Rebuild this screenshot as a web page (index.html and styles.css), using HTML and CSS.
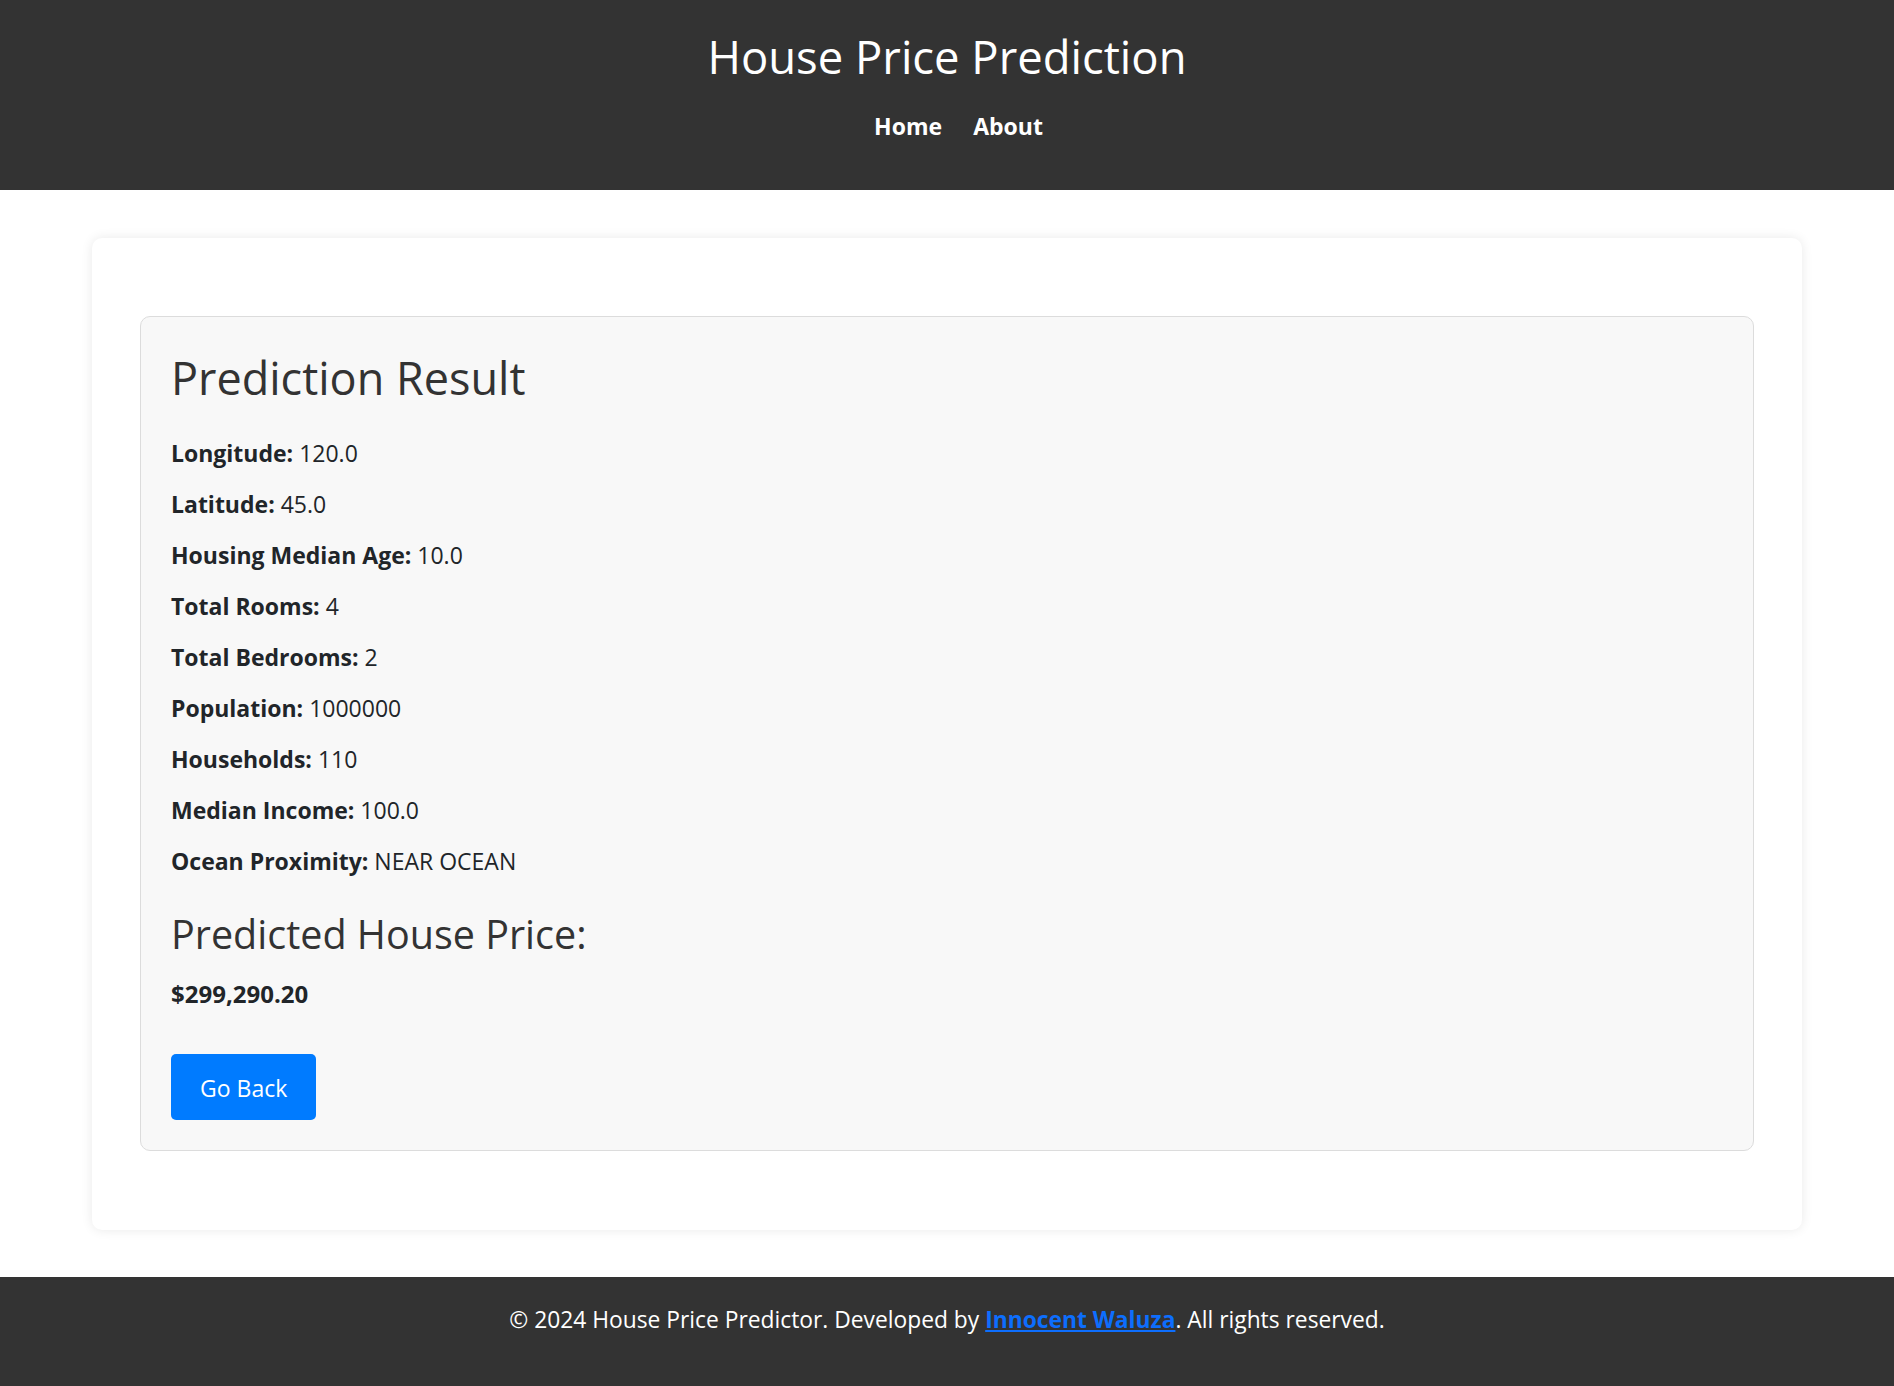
FILE: index.html
```html
<!DOCTYPE html>
<html lang="en">
<head>
<meta charset="utf-8">
<title>House Price Prediction</title>
<link rel="stylesheet" href="styles.css">
</head>
<body>
<header class="site-header">
  <h1 class="site-title">House Price Prediction</h1>
  <nav class="site-nav">
    <a href="#" class="nav-link">Home</a>
    <a href="#" class="nav-link">About</a>
  </nav>
</header>
<main class="page">
  <section class="card">
    <div class="result">
      <h2 class="result-title">Prediction Result</h2>
      <p class="row"><strong>Longitude:</strong> 120.0</p>
      <p class="row"><strong>Latitude:</strong> 45.0</p>
      <p class="row"><strong>Housing Median Age:</strong> 10.0</p>
      <p class="row"><strong>Total Rooms:</strong> 4</p>
      <p class="row"><strong>Total Bedrooms:</strong> 2</p>
      <p class="row"><strong>Population:</strong> 1000000</p>
      <p class="row"><strong>Households:</strong> 110</p>
      <p class="row"><strong>Median Income:</strong> 100.0</p>
      <p class="row"><strong>Ocean Proximity:</strong> NEAR OCEAN</p>
      <h3 class="price-title">Predicted House Price:</h3>
      <p class="price"><strong>$299,290.20</strong></p>
      <a href="#" class="btn">Go Back</a>
    </div>
  </section>
</main>
<footer class="site-footer">
  <p class="footer-text">© 2024 House Price Predictor. Developed by <a href="#" class="footer-link">Innocent Waluza</a>. All rights reserved.</p>
</footer>
</body>
</html>
```
FILE: styles.css
```css
* { box-sizing: border-box; }
body {
  margin: 0;
  font-family: "Open Sans", "Noto Sans", "Liberation Sans", sans-serif;
  font-size: 23px;
  line-height: 31px;
  color: #212529;
  background: #fff;
}
.site-header {
  background: #333333;
  color: #fff;
  text-align: center;
  height: 190px;
  padding-top: 26px;
}
.site-title {
  margin: 0;
  font-size: 45.4px;
  line-height: 60px;
  font-weight: 400;
}
.site-nav {
  margin-top: 25px;
  padding-left: 23px;
  display: flex;
  justify-content: center;
  gap: 31px;
}
.nav-link {
  color: #fff;
  text-decoration: none;
  font-weight: 700;
  font-size: 23px;
  line-height: 30px;
}
.page {
  padding: 48px 92px 47px;
}
.card {
  background: #fff;
  border-radius: 10px;
  box-shadow: 0 0 12px rgba(0, 0, 0, 0.09);
  padding: 78px 48px 79px;
}
.result {
  background: #f8f8f8;
  border: 1px solid #dcdcdc;
  border-radius: 10px;
  padding: 30px;
}
.result-title {
  margin: 4px 0 33px;
  font-size: 45px;
  line-height: 54px;
  font-weight: 400;
  color: #333;
}
.row {
  margin: 0 0 20px;
}
.price-title {
  margin: 34px 0 20px;
  font-size: 39.5px;
  line-height: 47px;
  font-weight: 400;
  color: #333;
}
.price {
  margin: 0 0 45px;
  font-size: 24px;
}
.btn {
  display: inline-block;
  vertical-align: top;
  background: #007bff;
  color: #fff;
  text-decoration: none;
  font-size: 23px;
  line-height: 31px;
  padding: 19px 29px 15.5px;
  border-radius: 5px;
}
.site-footer {
  background: #333333;
  color: #fff;
  text-align: center;
  height: 109px;
  padding-top: 27.5px;
}
.footer-text {
  margin: 0;
  font-size: 22.8px;
  line-height: 31px;
}
.footer-link {
  color: #0d6efd;
  font-weight: 700;
}
```
